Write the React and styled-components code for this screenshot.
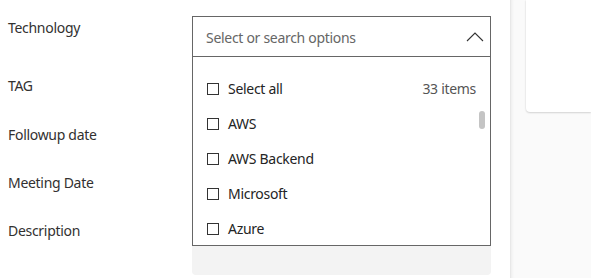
import React from 'react'
import styled, { createGlobalStyle } from 'styled-components'

const GlobalStyle = createGlobalStyle`
  html, body { margin: 0; padding: 0; background: #fff; }
  body { font-family: "Noto Sans", "Open Sans", sans-serif; overflow: hidden; }
`

const options = ['AWS', 'AWS Backend', 'Microsoft', 'Azure']

function App() {
  return (
    <Page>
      <GlobalStyle />
      <Form>
        <Row $h={58}>
          <Label>Technology</Label>
          <Combo>
            <ComboHeader>
              <Placeholder>Select or search options</Placeholder>
              <svg width="18" height="12" viewBox="0 0 18 12">
                <polyline points="1,10 9,2 17,10" fill="none" stroke="#333" strokeWidth="1.1" />
              </svg>
            </ComboHeader>
            <ListBox>
              <Option>
                <Check />
                <OptionText>Select all</OptionText>
                <Count>33 items</Count>
              </Option>
              {options.map(o => (
                <Option key={o}>
                  <Check />
                  <OptionText>{o}</OptionText>
                </Option>
              ))}
              <Thumb />
            </ListBox>
          </Combo>
        </Row>
        <Row $h={49}>
          <Label>TAG</Label>
          <Field />
        </Row>
        <Row $h={48}>
          <Label>Followup date</Label>
          <Field />
        </Row>
        <Row $h={48}>
          <Label>Meeting Date</Label>
          <Field />
        </Row>
        <Row $h={60}>
          <Label>Description</Label>
          <TextArea />
        </Row>
      </Form>
      <Side>
        <Card />
      </Side>
    </Page>
  )
}

const Page = styled.div`
  display: flex;
  width: 591px;
  height: 278px;
  overflow: hidden;
`

const Form = styled.div`
  width: 510px;
  flex-shrink: 0;
  padding: 16px 0 0 8px;
  box-sizing: border-box;
  display: flex;
  flex-direction: column;
`

const Row = styled.div`
  display: grid;
  grid-template-columns: 184px 299px;
  align-items: start;
  height: ${p => p.$h}px;
  flex-shrink: 0;
`

const Label = styled.div`
  font-size: 14px;
  line-height: 20px;
  padding-top: 2px;
  color: #323130;
  letter-spacing: -0.3px;
`

const Field = styled.div`
  height: 40px;
  border-radius: 4px;
  background: #fff;
`

const TextArea = styled.div`
  height: 56px;
  border-radius: 4px;
  background: #f3f3f3;
`

const Combo = styled.div`
  position: relative;
  z-index: 2;
`

const ComboHeader = styled.div`
  height: 41px;
  box-sizing: border-box;
  border: 1px solid #666;
  display: flex;
  align-items: center;
  justify-content: space-between;
  padding: 0 6px 0 13px;
  background: #fff;
`

const Placeholder = styled.span`
  font-size: 14px;
  color: #666;
  letter-spacing: -0.3px;
  margin-top: 1px;
`

const ListBox = styled.div`
  position: absolute;
  top: 100%;
  left: 0;
  right: 0;
  height: 189px;
  box-sizing: border-box;
  border: 1px solid #666;
  border-top: none;
  background: #fff;
  padding: 14px 14px 0 14px;
  overflow: hidden;
`

const Option = styled.div`
  display: flex;
  align-items: center;
  height: 35px;
  flex-shrink: 0;
`

const Check = styled.span`
  width: 12px;
  height: 12px;
  box-sizing: border-box;
  border: 1px solid #333;
  margin-right: 9px;
  flex-shrink: 0;
`

const OptionText = styled.span`
  font-size: 14px;
  color: #242424;
  letter-spacing: -0.3px;
  flex: 1;
`

const Count = styled.span`
  font-size: 14px;
  color: #555;
  letter-spacing: -0.3px;
`

const Thumb = styled.div`
  position: absolute;
  right: 5px;
  top: 54px;
  width: 6px;
  height: 18px;
  border-radius: 3px;
  background: #c4c4c4;
`

const Side = styled.div`
  flex: 1;
  background: #fafafa;
  border-left: 1px solid #e8e8e8;
  box-shadow: inset 3px 0 3px -2px rgba(0, 0, 0, 0.06);
  padding-left: 15px;
`

const Card = styled.div`
  height: 112px;
  background: #fff;
  border-bottom-left-radius: 4px;
  box-shadow: 0 1px 2px rgba(0, 0, 0, 0.14), 0 0 2px rgba(0, 0, 0, 0.08);
`

export default App
